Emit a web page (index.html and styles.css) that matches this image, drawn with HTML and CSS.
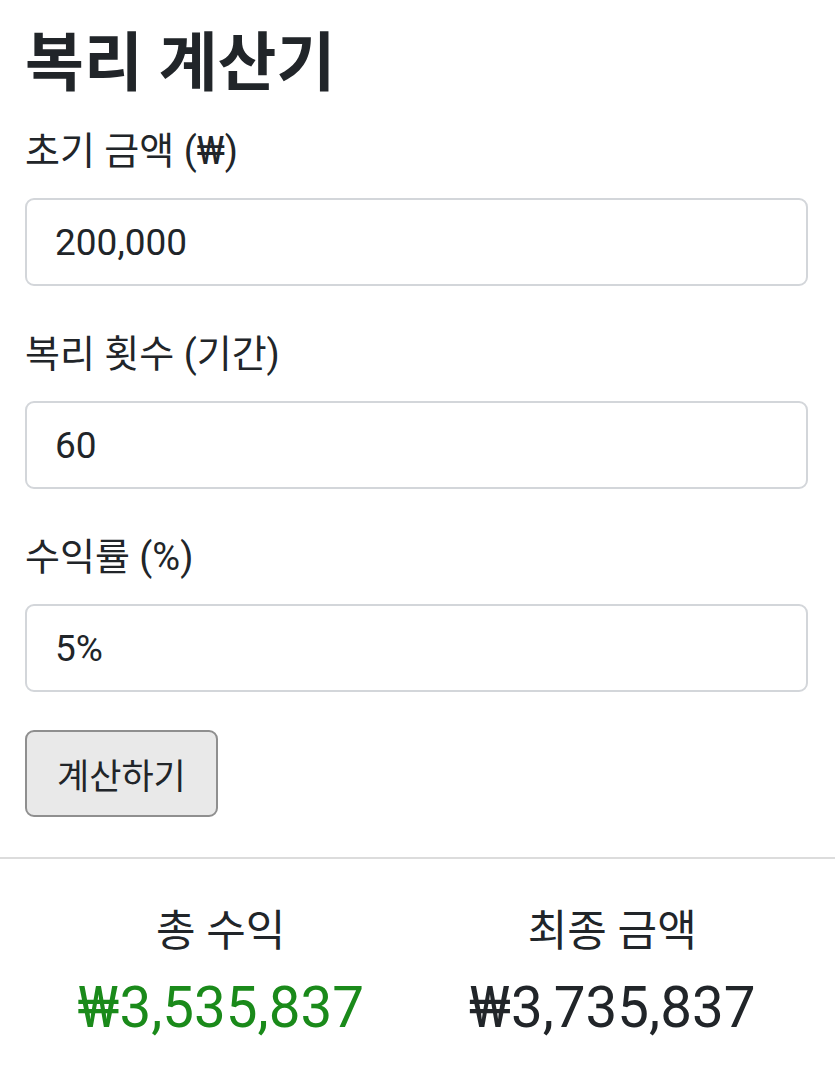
FILE: index.html
```html
<!DOCTYPE html>
<html lang="ko">
<head>
<meta charset="utf-8">
<title>복리 계산기</title>
<link rel="stylesheet" href="styles.css">
</head>
<body>
<main class="calc">
  <h1 class="title">복리 계산기</h1>
  <div class="group">
    <label class="label" for="principal">초기 금액 (₩)</label>
    <input class="field" id="principal" type="text" value="200,000">
  </div>
  <div class="group">
    <label class="label" for="periods">복리 횟수 (기간)</label>
    <input class="field" id="periods" type="text" value="60">
  </div>
  <div class="group">
    <label class="label" for="rate">수익률 (%)</label>
    <input class="field" id="rate" type="text" value="5%">
  </div>
  <button class="btn" type="button">계산하기</button>
</main>
<hr class="divider">
<section class="results">
  <div class="result">
    <div class="result-label">총 수익</div>
    <div class="result-value profit">₩3,535,837</div>
  </div>
  <div class="result">
    <div class="result-label">최종 금액</div>
    <div class="result-value">₩3,735,837</div>
  </div>
</section>
</body>
</html>
```
FILE: styles.css
```css
html, body {
  margin: 0;
  padding: 0;
  background: #ffffff;
}
body {
  font-family: "Roboto", "Noto Sans CJK KR", sans-serif;
  color: #212529;
}
.calc {
  padding: 28px 27px 0 25px;
  display: flex;
  flex-direction: column;
  align-items: flex-start;
}
.title {
  margin: 0 0 26px;
  font-size: 64px;
  line-height: 72px;
  font-weight: 700;
}
.group {
  width: 100%;
  margin-bottom: 43px;
  display: flex;
  flex-direction: column;
}
.group:last-of-type {
  margin-bottom: 38px;
}
.label {
  font-size: 38px;
  line-height: 51px;
  margin-bottom: 21px;
}
.field {
  box-sizing: border-box;
  width: 100%;
  height: 88px;
  margin: 0;
  padding: 0 28px;
  border: 2px solid #d3d6da;
  border-radius: 9px;
  font-family: "Roboto", "Noto Sans CJK KR", sans-serif;
  font-size: 37px;
  color: #212529;
  background: #ffffff;
  outline: none;
}
.btn {
  box-sizing: border-box;
  height: 87px;
  padding: 0 30px;
  margin: 0;
  border: 2px solid #8f8f8f;
  border-radius: 9px;
  background: #e9e9e9;
  font-family: "Roboto", "Noto Sans CJK KR", sans-serif;
  font-size: 35px;
  color: #212529;
}
.divider {
  margin: 40px 0 0;
  border: 0;
  border-top: 2px solid #dcdcdc;
  height: 0;
}
.results {
  display: grid;
  grid-template-columns: 1fr 1fr;
  padding: 44px 27px 0 25px;
}
.result {
  display: flex;
  flex-direction: column;
  align-items: center;
}
.result-label {
  font-size: 43px;
  line-height: 56px;
}
.result-value {
  margin-top: 16px;
  font-size: 56.5px;
  line-height: 66px;
}
.profit {
  color: #1a8a1a;
}
```
